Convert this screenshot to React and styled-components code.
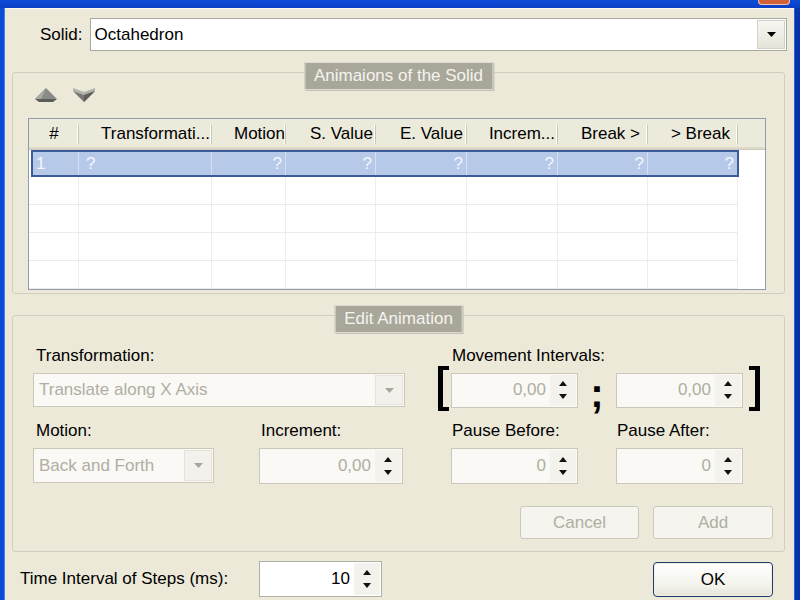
import React from 'react';
import styled, { createGlobalStyle } from 'styled-components';

const GlobalStyle = createGlobalStyle`
  html, body {
    margin: 0;
    padding: 0;
    background: #ece9d8;
  }

  body {
    font-family: "Liberation Sans", Arial, sans-serif;
    font-size: 17px;
    color: #000;
  }
`;

const Frame = styled.div`
  width: 800px;
  height: 600px;
  display: flex;
  flex-direction: column;
  overflow: hidden;
  background: #ece9d8;
`;

const TitleStrip = styled.div`
  height: 8px;
  flex: none;
  display: flex;
  justify-content: flex-end;
  background: linear-gradient(#0b4ad8, #0a3ec6);
`;

const CloseButton = styled.div`
  width: 32px;
  height: 5px;
  margin-right: 10px;
  box-sizing: border-box;
  background: #d0603a;
  border: 1px solid #f1c5b4;
  border-top: none;
  border-radius: 0 0 4px 4px;
`;

const FrameBody = styled.div`
  flex: 1;
  display: flex;
`;

const Edge = styled.div`
  flex: none;
  width: ${({ $w }) => $w}px;
  background: ${({ $color }) => $color};
  box-shadow: ${({ $shade }) => $shade};
`;

const Content = styled.div`
  flex: 1;
  display: flex;
  flex-direction: column;
  border-top: 1px solid #f8f7f0;
`;

const SolidRow = styled.div`
  display: flex;
  align-items: center;
  gap: 7px;
  height: 33px;
  margin: 9px 7px 0 35px;
`;

const Label = styled.div`
  line-height: 20px;
  white-space: nowrap;
  grid-column: ${({ $col }) => $col || 'auto'};
  grid-row: ${({ $row }) => $row || 'auto'};
  padding-left: ${({ $pl }) => $pl || 0}px;
  margin-top: ${({ $mt }) => $mt || 0}px;
  margin-bottom: ${({ $mb }) => $mb || 0}px;
  width: ${({ $w }) => ($w ? `${$w}px` : 'auto')};
  flex: none;
`;

/* combo box */

const ComboFrame = styled.div`
  display: flex;
  box-sizing: border-box;
  height: ${({ $h }) => $h}px;
  flex: ${({ $grow }) => ($grow ? 1 : 'none')};
  grid-column: ${({ $col }) => $col || 'auto'};
  grid-row: ${({ $row }) => $row || 'auto'};
  padding: 1px;
  border: 1px solid ${({ $disabled }) => ($disabled ? '#cbc8ba' : '#a9a89f')};
  background: ${({ $disabled }) => ($disabled ? '#faf9f5' : '#fff')};
`;

const ComboText = styled.div`
  flex: 1;
  display: flex;
  align-items: center;
  padding-left: ${({ $pl }) => $pl}px;
  white-space: nowrap;
  overflow: hidden;
  color: ${({ $disabled }) => ($disabled ? '#b0aea2' : '#000')};
`;

const DropButton = styled.div`
  flex: none;
  width: 28px;
  box-sizing: border-box;
  display: flex;
  align-items: center;
  justify-content: center;
  border: 1px solid ${({ $disabled }) => ($disabled ? '#e4e2d9' : '#d3d1c6')};
  background: ${({ $disabled }) =>
    $disabled ? '#f2f1eb' : 'linear-gradient(#f7f6f1, #e6e4da)'};
`;

const ComboBox = ({ value, disabled, h, grow, col, row, pl = 4 }) => (
  <ComboFrame $disabled={disabled} $h={h} $grow={grow} $col={col} $row={row}>
    <ComboText $disabled={disabled} $pl={pl}>
      {value}
    </ComboText>
    <DropButton $disabled={disabled}>
      <svg width="9" height="5" viewBox="0 0 9 5">
        <polygon points="0,0 9,0 4.5,5" fill={disabled ? '#a9a79b' : '#000'} />
      </svg>
    </DropButton>
  </ComboFrame>
);

/* spin box */

const SpinFrame = styled.div`
  display: flex;
  box-sizing: border-box;
  width: ${({ $w }) => ($w ? `${$w}px` : '100%')};
  height: ${({ $h }) => $h}px;
  grid-column: ${({ $col }) => $col || 'auto'};
  grid-row: ${({ $row }) => $row || 'auto'};
  padding: 1px;
  border: 1px solid ${({ $disabled }) => ($disabled ? '#cbc8ba' : '#b1b0a6')};
  background: ${({ $disabled }) => ($disabled ? '#faf9f5' : '#fff')};
`;

const SpinValue = styled.div`
  flex: 1;
  display: flex;
  align-items: center;
  justify-content: flex-end;
  padding-right: 4px;
  color: ${({ $disabled }) => ($disabled ? '#b0aea2' : '#000')};
`;

const SpinArrows = styled.div`
  flex: none;
  width: 26px;
  display: flex;
  flex-direction: column;
  align-items: center;
  justify-content: center;
  gap: 8px;
  background: #f3f2ec;
`;

const SpinBox = ({ value, disabled, w, h, col, row }) => (
  <SpinFrame $disabled={disabled} $w={w} $h={h} $col={col} $row={row}>
    <SpinValue $disabled={disabled}>{value}</SpinValue>
    <SpinArrows>
      <svg width="8" height="5" viewBox="0 0 8 5">
        <polygon points="4,0 8,5 0,5" fill="#111" />
      </svg>
      <svg width="8" height="5" viewBox="0 0 8 5">
        <polygon points="0,0 8,0 4,5" fill="#111" />
      </svg>
    </SpinArrows>
  </SpinFrame>
);

/* group boxes */

const GroupBox = styled.section`
  position: relative;
  box-sizing: border-box;
  height: ${({ $h }) => $h}px;
  margin: ${({ $mt }) => $mt}px 9px 0 7px;
  padding: ${({ $pad }) => $pad};
  border: 1px solid #d0cfbf;
  border-radius: 3px;
  display: flex;
  flex-direction: column;
`;

const GroupCaption = styled.div`
  position: absolute;
  top: -11px;
  left: 50%;
  transform: translateX(-50%);
  height: 28px;
  box-sizing: border-box;
  padding: 0 9px;
  display: flex;
  align-items: center;
  white-space: nowrap;
  background: #a9a79a;
  color: #f5f4ef;
  border: 1px solid #dedcd2;
  box-shadow: 1px 1px 0 #c4c2b6;
`;

const ArrowRow = styled.div`
  display: flex;
  gap: 16px;
  height: 14px;
  padding-left: 7px;
`;

/* list view */

const ListView = styled.div`
  margin-top: 16px;
  height: 172px;
  box-sizing: border-box;
  border: 1px solid #8e9cae;
  background: #fff;
  display: flex;
  flex-direction: column;
  overflow: hidden;
`;

const HeaderRow = styled.div`
  flex: none;
  height: 31px;
  box-sizing: border-box;
  display: flex;
  background: #ebeadb;
  border-bottom: 1px solid #cdc9b8;
  box-shadow: inset 0 -2px 0 #dedac9;
`;

const HeaderCell = styled.div`
  flex: none;
  width: ${({ $w }) => $w}px;
  box-sizing: border-box;
  display: flex;
  align-items: center;
  justify-content: ${({ $align }) => ($align === 'center' ? 'center' : 'flex-end')};
  padding-right: ${({ $pad }) => $pad || 0}px;
  white-space: nowrap;
  overflow: hidden;
  background: linear-gradient(#c9c6b3, #c9c6b3) right 6px / 1px 19px no-repeat,
    linear-gradient(#fff, #fff) right 1px top 6px / 1px 19px no-repeat;
`;

const ListBody = styled.div`
  flex: 1;
  overflow: hidden;
`;

const DataRow = styled.div`
  display: flex;
  height: 28px;
  width: ${({ $w }) => $w}px;
  box-sizing: border-box;
  border-bottom: 1px solid #ebebeb;
`;

const SelectedRow = styled(DataRow)`
  height: 27px;
  margin-left: 2px;
  width: ${({ $w }) => $w - 1}px;
  border: 2px solid #3c5b9b;
  background: #b7c9e9;
  color: #f4f6fb;
`;

const DataCell = styled.div`
  flex: none;
  width: ${({ $w }) => $w}px;
  box-sizing: border-box;
  display: flex;
  align-items: center;
  justify-content: ${({ $align }) => ($align === 'left' ? 'flex-start' : 'flex-end')};
  padding: 0 ${({ $pr }) => $pr || 0}px 0 ${({ $pl }) => $pl || 0}px;
  border-right: 1px solid ${({ $line }) => $line};
`;

/* edit area */

const EditGrid = styled.div`
  display: grid;
  grid-template-columns: 181px 45px 146px 33px 13px 127px 38px 127px 17px;
  grid-template-rows: auto 34px auto 35px;
  align-items: center;
`;

const OpenBracket = styled.div`
  grid-column: 5;
  grid-row: 2;
  align-self: start;
  justify-self: start;
  margin-top: -7px;
  width: 11px;
  height: 45px;
  box-sizing: border-box;
  border: 4px solid #000;
  border-left-width: 5px;
  border-right: none;
`;

const CloseBracket = styled(OpenBracket)`
  grid-column: 9;
  justify-self: end;
  border-left: none;
  border-right: 5px solid #000;
`;

const Semicolon = styled.div`
  grid-column: 7;
  grid-row: 2;
  align-self: start;
  justify-self: center;
  margin-top: 0;
  font-size: 40px;
  font-weight: bold;
  line-height: 40px;
`;

const ButtonRow = styled.div`
  display: flex;
  justify-content: flex-end;
  gap: 14px;
  margin-top: 23px;
`;

const Button = styled.button`
  width: ${({ $w }) => $w}px;
  height: ${({ $h }) => $h}px;
  padding: 0;
  font: inherit;
  border-radius: ${({ $primary }) => ($primary ? 4 : 3)}px;
  border: 1px solid ${({ $primary }) => ($primary ? '#1c3c6a' : '#cbc9bc')};
  background: ${({ $primary }) =>
    $primary ? 'linear-gradient(#ffffff, #f3f2ec 70%, #e4e2d8)' : '#f5f4ee'};
  color: ${({ disabled }) => (disabled ? '#b0aea2' : '#000')};
  box-shadow: ${({ $primary }) => ($primary ? 'inset 0 0 0 1px #f0efe8' : 'none')};
`;

const TimeRow = styled.div`
  display: flex;
  align-items: center;
  height: 36px;
  margin-top: 9px;
  padding-left: 15px;
`;

const OkWrap = styled.div`
  margin-left: auto;
  margin-right: 21px;
  padding-top: 1px;
`;

const columns = [
  { title: '#', width: 50, align: 'center' },
  { title: 'Transformati...', width: 133, pad: 2 },
  { title: 'Motion', width: 74, pad: 1 },
  { title: 'S. Value', width: 90, pad: 3 },
  { title: 'E. Value', width: 91, pad: 4 },
  { title: 'Increm...', width: 91, pad: 3 },
  { title: 'Break >', width: 90, pad: 8 },
  { title: '> Break', width: 90, pad: 8 },
];

const tableWidth = columns.reduce((sum, c) => sum + c.width, 0);

const UpArrow = () => (
  <svg width="22" height="14" viewBox="0 0 22 14">
    <polygon points="11,0 22,11 0,11" fill="#8a8a86" />
    <polygon points="11,0 6,11 0,11" fill="#aaaaa5" />
    <polygon points="0,11 22,11 18,14 4,14" fill="#5c5c59" />
  </svg>
);

const DownArrow = () => (
  <svg width="22" height="14" viewBox="0 0 22 14">
    <polygon points="0,0 11,4 22,0 22,3 11,7 0,3" fill="#b3b3ae" />
    <polygon points="0,3 11,7 22,3 11,14" fill="#777773" />
    <polygon points="11,7 22,3 11,14" fill="#5f5f5c" />
  </svg>
);

const App = () => (
  <>
    <GlobalStyle />
    <Frame>
      <TitleStrip>
        <CloseButton />
      </TitleStrip>
      <FrameBody>
        <Edge $w={5} $color="#0b4bd8" $shade="inset -1px 0 0 #4a7fee" />
        <Content>
          <SolidRow>
            <Label>Solid:</Label>
            <ComboBox value="Octahedron" h={33} grow pl={3} />
          </SolidRow>

          <GroupBox $mt={21} $h={222} $pad="15px 18px 0 15px">
            <GroupCaption>Animaions of the Solid</GroupCaption>
            <ArrowRow>
              <UpArrow />
              <DownArrow />
            </ArrowRow>
            <ListView>
              <HeaderRow>
                {columns.map((c) => (
                  <HeaderCell key={c.title} $w={c.width} $align={c.align} $pad={c.pad}>
                    {c.title}
                  </HeaderCell>
                ))}
              </HeaderRow>
              <ListBody>
                <SelectedRow $w={tableWidth}>
                  {columns.map((c, i) => (
                    <DataCell
                      key={c.title}
                      $w={i === 0 ? c.width - 4 : c.width}
                      $align={i < 2 ? 'left' : 'right'}
                      $pl={i === 0 ? 3 : i === 1 ? 7 : 0}
                      $pr={i < 2 ? 0 : 3}
                      $line={i === columns.length - 1 ? 'transparent' : '#d5dff1'}
                    >
                      {i === 0 ? '1' : '?'}
                    </DataCell>
                  ))}
                </SelectedRow>
                {[0, 1, 2, 3].map((r) => (
                  <DataRow key={r} $w={tableWidth}>
                    {columns.map((c) => (
                      <DataCell key={c.title} $w={c.width} $line="#ededed" />
                    ))}
                  </DataRow>
                ))}
              </ListBody>
            </ListView>
          </GroupBox>

          <GroupBox $mt={21} $h={237} $pad="30px 11px 0 20px">
            <GroupCaption>Edit Animation</GroupCaption>
            <EditGrid>
              <Label $col="1 / 4" $row={1} $pl={3} $mb={7}>
                Transformation:
              </Label>
              <Label $col="6 / 10" $row={1} $pl={1} $mb={7}>
                Movement Intervals:
              </Label>

              <ComboBox value="Translate along X Axis" disabled h={34} col="1 / 4" row={2} pl={4} />
              <OpenBracket />
              <SpinBox value="0,00" disabled h={35} col={6} row={2} />
              <Semicolon>;</Semicolon>
              <SpinBox value="0,00" disabled h={35} col={8} row={2} />
              <CloseBracket />

              <Label $col={1} $row={3} $pl={3} $mt={14} $mb={7}>
                Motion:
              </Label>
              <Label $col={3} $row={3} $pl={2} $mt={14} $mb={7}>
                Increment:
              </Label>
              <Label $col={6} $row={3} $pl={1} $mt={14} $mb={7}>
                Pause Before:
              </Label>
              <Label $col={8} $row={3} $pl={1} $mt={14} $mb={7}>
                Pause After:
              </Label>

              <ComboBox value="Back and Forth" disabled h={35} col={1} row={4} pl={4} />
              <SpinBox value="0,00" disabled w={144} h={36} col={3} row={4} />
              <SpinBox value="0" disabled h={36} col={6} row={4} />
              <SpinBox value="0" disabled h={36} col={8} row={4} />
            </EditGrid>
            <ButtonRow>
              <Button $w={119} $h={33} disabled>
                Cancel
              </Button>
              <Button $w={120} $h={33} disabled>
                Add
              </Button>
            </ButtonRow>
          </GroupBox>

          <TimeRow>
            <Label $w={239}>Time Interval of Steps (ms):</Label>
            <SpinBox value="10" w={123} h={36} />
            <OkWrap>
              <Button $w={120} $h={35} $primary>
                OK
              </Button>
            </OkWrap>
          </TimeRow>
        </Content>
        <Edge $w={6} $color="#0833ab" $shade="inset 1px 0 0 #2c5fd8" />
      </FrameBody>
    </Frame>
  </>
);

export default App;
